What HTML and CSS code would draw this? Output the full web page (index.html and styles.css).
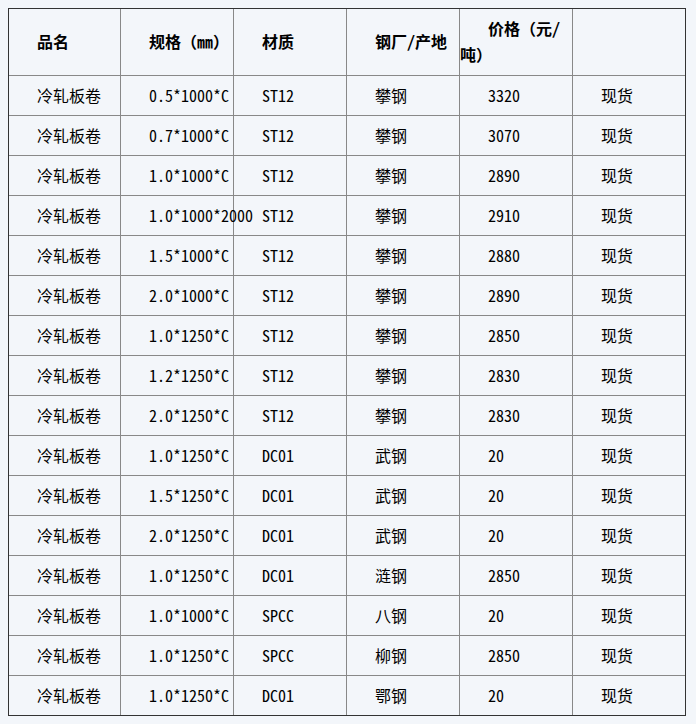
FILE: index.html
```html
<!DOCTYPE html>
<html lang="zh-CN">
<head>
<meta charset="utf-8">
<title>冷轧板卷价格</title>
<link rel="stylesheet" href="styles.css">
</head>
<body>
<table class="price-table">
  <thead>
    <tr class="head-row">
      <th class="c1">品名</th>
      <th>规格（㎜）</th>
      <th>材质</th>
      <th>钢厂/产地</th>
      <th>价格（元/吨）</th>
      <th class="last"></th>
    </tr>
  </thead>
  <tbody>
    <tr><td class="c1">冷轧板卷</td><td>0.5*1000*C</td><td>ST12</td><td>攀钢</td><td>3320</td><td class="last">现货</td></tr>
    <tr><td class="c1">冷轧板卷</td><td>0.7*1000*C</td><td>ST12</td><td>攀钢</td><td>3070</td><td class="last">现货</td></tr>
    <tr><td class="c1">冷轧板卷</td><td>1.0*1000*C</td><td>ST12</td><td>攀钢</td><td>2890</td><td class="last">现货</td></tr>
    <tr><td class="c1">冷轧板卷</td><td>1.0*1000*2000</td><td>ST12</td><td>攀钢</td><td>2910</td><td class="last">现货</td></tr>
    <tr><td class="c1">冷轧板卷</td><td>1.5*1000*C</td><td>ST12</td><td>攀钢</td><td>2880</td><td class="last">现货</td></tr>
    <tr><td class="c1">冷轧板卷</td><td>2.0*1000*C</td><td>ST12</td><td>攀钢</td><td>2890</td><td class="last">现货</td></tr>
    <tr><td class="c1">冷轧板卷</td><td>1.0*1250*C</td><td>ST12</td><td>攀钢</td><td>2850</td><td class="last">现货</td></tr>
    <tr><td class="c1">冷轧板卷</td><td>1.2*1250*C</td><td>ST12</td><td>攀钢</td><td>2830</td><td class="last">现货</td></tr>
    <tr><td class="c1">冷轧板卷</td><td>2.0*1250*C</td><td>ST12</td><td>攀钢</td><td>2830</td><td class="last">现货</td></tr>
    <tr><td class="c1">冷轧板卷</td><td>1.0*1250*C</td><td>DC01</td><td>武钢</td><td>20</td><td class="last">现货</td></tr>
    <tr><td class="c1">冷轧板卷</td><td>1.5*1250*C</td><td>DC01</td><td>武钢</td><td>20</td><td class="last">现货</td></tr>
    <tr><td class="c1">冷轧板卷</td><td>2.0*1250*C</td><td>DC01</td><td>武钢</td><td>20</td><td class="last">现货</td></tr>
    <tr><td class="c1">冷轧板卷</td><td>1.0*1250*C</td><td>DC01</td><td>涟钢</td><td>2850</td><td class="last">现货</td></tr>
    <tr><td class="c1">冷轧板卷</td><td>1.0*1000*C</td><td>SPCC</td><td>八钢</td><td>20</td><td class="last">现货</td></tr>
    <tr><td class="c1">冷轧板卷</td><td>1.0*1250*C</td><td>SPCC</td><td>柳钢</td><td>2850</td><td class="last">现货</td></tr>
    <tr class="last-row"><td class="c1">冷轧板卷</td><td>1.0*1250*C</td><td>DC01</td><td>鄂钢</td><td>20</td><td class="last">现货</td></tr>
  </tbody>
</table>
</body>
</html>
```
FILE: styles.css
```css
html, body {
  background: #f3f6fa;
}
body {
  margin: 8px;
  font-family: "Noto Sans Mono CJK SC", "Noto Sans CJK SC", "DejaVu Sans Mono", monospace;
  font-size: 16px;
  color: #000;
}
.price-table {
  border-collapse: separate;
  border-spacing: 0;
  table-layout: fixed;
  width: 678px;
  border: 1px solid #333;
}
.price-table th,
.price-table td {
  width: 112px;
  padding: 0;
  text-indent: 28px;
  text-align: left;
  vertical-align: middle;
  border-right: 1px solid #888;
  border-bottom: 1px solid #888;
  white-space: nowrap;
  overflow: visible;
}
.price-table .c1 {
  width: 111px;
}
.price-table .last {
  border-right: none;
}
.price-table .last-row td {
  border-bottom: none;
}
.head-row th {
  height: 63px;
  padding-bottom: 3px;
  font-weight: bold;
  line-height: 26px;
  white-space: normal;
}
.price-table td {
  height: 37px;
  padding-bottom: 2px;
  font-weight: normal;
  line-height: 20px;
}
```
